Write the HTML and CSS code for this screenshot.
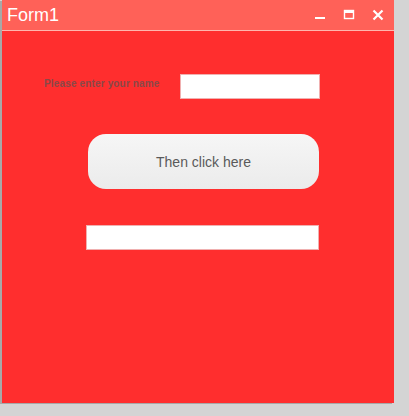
FILE: index.html
```html
<!DOCTYPE html>
<html>
<head>
<meta charset="utf-8">
<link rel="stylesheet" href="styles.css">
</head>
<body>
<div class="window">
  <div class="titlebar">
    <span class="title">Form1</span>
    <div class="controls">
      <svg class="ctl" width="14" height="14" viewBox="0 0 14 14"><rect x="2" y="9" width="10" height="2" fill="#fff"/></svg>
      <svg class="ctl" width="14" height="14" viewBox="0 0 14 14"><rect x="2.5" y="2.5" width="9" height="8" fill="none" stroke="#fff" stroke-width="1.4"/><rect x="2" y="2" width="10" height="3" fill="#fff"/></svg>
      <svg class="ctl" width="14" height="14" viewBox="0 0 14 14"><path d="M2.5 2.5 L11.5 11.5 M11.5 2.5 L2.5 11.5" stroke="#fff" stroke-width="2.2"/></svg>
    </div>
  </div>
  <div class="content">
    <div class="row">
      <span class="label">Please enter your name</span>
      <div class="input name"></div>
    </div>
    <div class="btn">Then click here</div>
    <div class="input result"></div>
  </div>
</div>
</body>
</html>
```
FILE: styles.css
```css
html, body { margin: 0; padding: 0; }
body {
  background: #d4d4d4;
  width: 409px;
  height: 416px;
  overflow: hidden;
  font-family: "Liberation Sans", Arial, sans-serif;
}
.window {
  margin-left: 2px;
  width: 392px;
  height: 403px;
  background: #ff2e2e;
  display: flex;
  flex-direction: column;
  box-shadow: -2px 1px 0 #a8a8a8;
}
.titlebar {
  height: 30px;
  background: #ff6158;
  border-bottom: 1px solid #ffb6ae;
  display: flex;
  align-items: center;
  justify-content: space-between;
  box-sizing: content-box;
}
.title {
  color: #fff;
  font-size: 18px;
  margin-left: 5px;
  margin-top: 1px;
}
.controls {
  display: flex;
  gap: 15px;
  margin-right: 9px;
}
.ctl { display: block; }
.content {
  display: flex;
  flex-direction: column;
  padding-left: 42px;
}
.row {
  display: flex;
  align-items: center;
  margin-top: 43px;
}
.label {
  font-size: 10px;
  font-weight: bold;
  color: #8a4848;
  letter-spacing: 0.15px;
  width: 136px;
  margin-top: -7px;
}
.input {
  background: #fff;
  border: 1px solid #f0b0b0;
  box-sizing: border-box;
  height: 25px;
}
.name { width: 140px; }
.btn {
  margin-top: 35px;
  margin-left: 44px;
  width: 231px;
  height: 55px;
  border-radius: 18px;
  background: linear-gradient(#f6f6f6, #ebebeb);
  color: #5a5a5a;
  font-size: 14px;
  display: flex;
  align-items: center;
  justify-content: center;
}
.result {
  margin-top: 36px;
  margin-left: 42px;
  width: 233px;
}
```
